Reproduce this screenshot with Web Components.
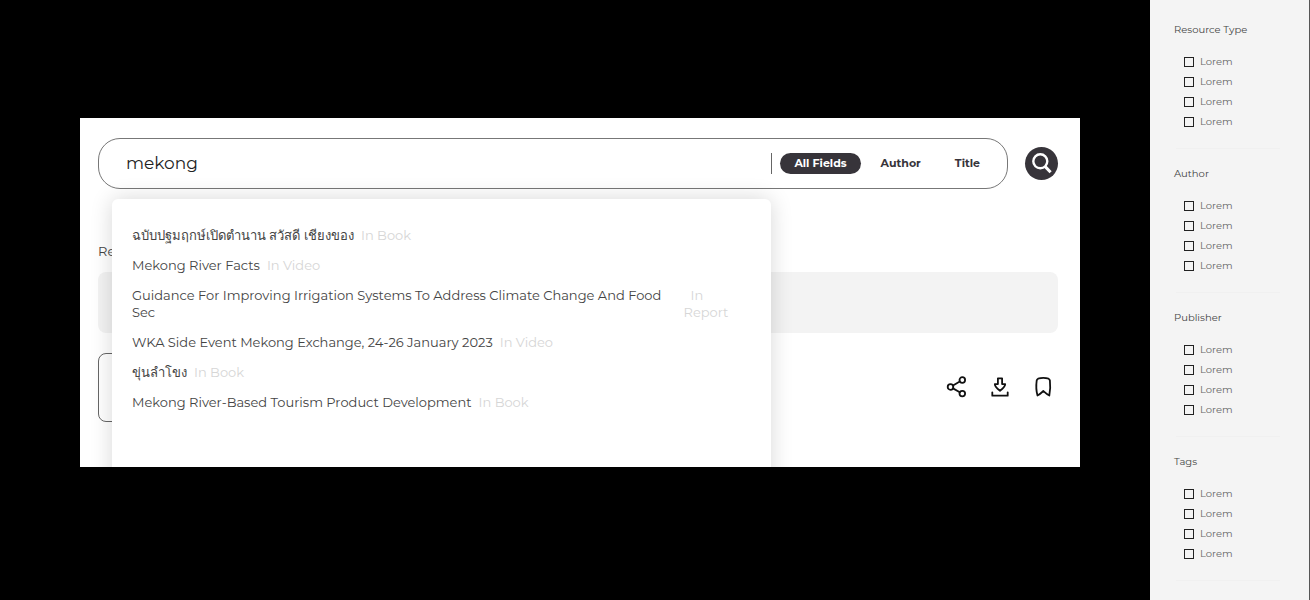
<!DOCTYPE html>
<html lang="en">
<head>
<meta charset="utf-8">
<meta name="viewport" content="width=device-width, initial-scale=1">
<title>Library search</title>
<style>
body {
  margin: 0;
  --ink: #37343a;
  --text: #444;
  --muted: #d6d6d6;
  --surface: #f4f4f4;
  font-family: Montserrat, Inter, "Noto Sans", "Open Sans", sans-serif;
  font-size: 13px;
  color: var(--text);
  background: #000;
}
</style>
</head>
<body>
<library-page>
  <search-panel>
    <search-box value="mekong">
      <search-results>
        <search-hit kind="In Book" lang="th">ฉบับปฐมฤกษ์เปิดตำนาน สวัสดี เชียงของ</search-hit>
        <search-hit kind="In Video">Mekong River Facts</search-hit>
        <search-hit kind="In Report">Guidance For Improving Irrigation Systems To Address Climate Change And Food Sec</search-hit>
        <search-hit kind="In Video">WKA Side Event Mekong Exchange, 24-26 January 2023</search-hit>
        <search-hit kind="In Book" lang="th">ขุ่นลำโขง</search-hit>
        <search-hit kind="In Book">Mekong River-Based Tourism Product Development</search-hit>
      </search-results>
    </search-box>
    <resource-toolbar heading="Re"></resource-toolbar>
  </search-panel>
  <filter-sidebar slot="sidebar">
    <filter-group heading="Resource Type" options="Lorem,Lorem,Lorem,Lorem"></filter-group>
    <filter-group heading="Author" options="Lorem,Lorem,Lorem,Lorem"></filter-group>
    <filter-group heading="Publisher" options="Lorem,Lorem,Lorem,Lorem"></filter-group>
    <filter-group heading="Tags" options="Lorem,Lorem,Lorem,Lorem"></filter-group>
  </filter-sidebar>
</library-page>

<script>
class BaseElement extends HTMLElement {
  constructor() {
    super();
    this.attachShadow({ mode: 'open' });
    this.shadowRoot.innerHTML = this.render();
  }
}

class LibraryPage extends BaseElement {
  render() {
    return `
<style>
:host {
  display: grid;
  grid-template-columns: 1fr 160px;
  height: 100vh;
  overflow: hidden;
}
main {
  display: grid;
  padding: 118px 70px 133px 80px;
  min-width: 0;
  background: #000;
}
</style>
<main><slot></slot></main>
<slot name="sidebar"></slot>`;
  }
}

class SearchPanel extends BaseElement {
  render() {
    return `
<style>
:host {
  display: block;
  box-sizing: border-box;
  padding: 20px 22px 0 18px;
  overflow: hidden;
  background: #fff;
}
</style>
<slot></slot>`;
  }
}

class SearchBox extends BaseElement {
  render() {
    return `
<style>
:host {
  display: block;
  position: relative;
}
form {
  display: flex;
  align-items: center;
  gap: 17px;
}
.field {
  flex: 1;
  display: flex;
  align-items: center;
  gap: 8px;
  min-width: 0;
  padding: 14px 13px 14px 27px;
  border: 1px solid #777;
  border-radius: 22px;
}
input {
  flex: 1;
  min-width: 0;
  padding: 0;
  border: 0;
  outline: none;
  background: none;
  font: inherit;
  font-size: 17px;
  line-height: 21px;
  color: #222;
}
.scopes {
  display: flex;
  gap: 6px;
  padding-left: 8px;
  border-left: 1px solid #666;
}
.scopes button {
  padding: 0 14px;
  border: 0;
  border-radius: 11px;
  background: none;
  color: var(--ink);
  font: inherit;
  font-size: 11px;
  font-weight: 700;
  line-height: 21px;
  cursor: pointer;
}
.scopes button[aria-pressed="true"] {
  background: var(--ink);
  color: #fff;
}
.submit {
  display: flex;
  padding: 0;
  border: 0;
  border-radius: 50%;
  background: var(--ink);
  cursor: pointer;
}
</style>
<form role="search">
  <div class="field">
    <input type="text" aria-label="Search" value="${this.getAttribute('value') || ''}">
    <div class="scopes">
      <button type="button" aria-pressed="true">All Fields</button>
      <button type="button" aria-pressed="false">Author</button>
      <button type="button" aria-pressed="false">Title</button>
    </div>
  </div>
  <button class="submit" type="submit" aria-label="Search">
    <svg width="33" height="33" viewBox="0 0 33 33" fill="none" stroke="#fff">
      <circle cx="15.300" cy="14.300" r="7" stroke-width="2.400"/>
      <path d="M20 19.400l5.600 5.800" stroke-width="3"/>
    </svg>
  </button>
</form>
<slot></slot>`;
  }

  connectedCallback() {
    const scopes = this.shadowRoot.querySelectorAll('.scopes button');
    scopes.forEach(scope => {
      scope.addEventListener('click', () => {
        scopes.forEach(s => s.setAttribute('aria-pressed', s === scope));
      });
    });
    this.shadowRoot.querySelector('form').addEventListener('submit', e => e.preventDefault());
  }
}

class SearchResults extends BaseElement {
  render() {
    return `
<style>
:host {
  display: flex;
  flex-direction: column;
  gap: 13px;
  position: absolute;
  z-index: 1;
  top: calc(100% + 10px);
  left: 14px;
  right: 287px;
  box-sizing: border-box;
  min-height: 320px;
  padding: 28px 20px;
  border-radius: 6px;
  background: #fff;
  box-shadow: 0 0 22px rgba(0, 0, 0, .16);
}
</style>
<slot></slot>`;
  }
}

class SearchHit extends BaseElement {
  render() {
    return `
<style>
:host {
  display: block;
  line-height: 17px;
}
a {
  display: flex;
  color: inherit;
  text-decoration: none;
}
:host(:lang(th)) .title {
  font-weight: 500;
}
.kind {
  flex: 0 1 auto;
  text-indent: 7px;
  color: var(--muted);
}
</style>
<a href="#"><span class="title"><slot></slot></span><span class="kind">${this.getAttribute('kind')}</span></a>`;
  }
}

class ResourceToolbar extends BaseElement {
  render() {
    return `
<style>
:host {
  display: block;
}
h2 {
  margin: 52px 0 11px;
  font-size: 13px;
  font-weight: 400;
  line-height: 20px;
}
.bar {
  height: 61px;
  border-radius: 8px;
  background: #f3f3f3;
}
.row {
  display: flex;
  align-items: center;
  justify-content: space-between;
  margin-top: 20px;
}
.card {
  box-sizing: border-box;
  width: 60%;
  height: 69px;
  border: 1px solid #666;
  border-radius: 8px;
}
.actions {
  display: flex;
  gap: 19px;
  margin: 0 3px 2px 0;
}
.actions button {
  display: flex;
  padding: 0;
  border: 0;
  background: none;
  color: #111;
  cursor: pointer;
}
svg {
  fill: none;
  stroke: currentColor;
  stroke-width: 1.800;
  stroke-linecap: round;
  stroke-linejoin: round;
}
</style>
<h2>${this.getAttribute('heading')}</h2>
<div class="bar"></div>
<div class="row">
  <div class="card"></div>
  <div class="actions">
    <button aria-label="Share">
      <svg width="24" height="24" viewBox="0 0 24 24">
        <circle cx="5.500" cy="12" r="2.800"/>
        <circle cx="17.300" cy="5" r="2.800"/>
        <circle cx="17.300" cy="18.600" r="2.800"/>
        <path d="M8 10.600l6.800-4.100M8 13.400l6.800 3.800"/>
      </svg>
    </button>
    <button aria-label="Download">
      <svg width="24" height="24" viewBox="0 0 24 24">
        <path d="M9.900 3.300h4.200v5.800h3.100c0 2.200-2.500 4.800-5.200 6.700c-2.700-1.900-5.200-4.500-5.200-6.700h3.100z"/>
        <path d="M4.300 17.300v3.400h15.400v-3.400"/>
      </svg>
    </button>
    <button aria-label="Bookmark">
      <svg width="24" height="24" viewBox="0 0 24 24">
        <path d="M5.700 5.500C6 3.400 7.500 2.800 12.300 2.800s6.300.6 6.600 2.700c.5 4.500.4 10.500-.6 15c-2-.8-3.900-2.600-6-4.500c-2.100 1.900-3.800 3.700-5.800 4.500C5.200 16 5.100 10 5.700 5.500z"/>
      </svg>
    </button>
  </div>
</div>`;
  }
}

class FilterSidebar extends BaseElement {
  render() {
    return `
<style>
:host {
  display: block;
  padding: 20px 29px 0 24px;
  border-right: 1px solid #555;
  overflow: hidden;
  background: var(--surface);
}
</style>
<aside><slot></slot></aside>`;
  }
}

class FilterGroup extends BaseElement {
  render() {
    const options = this.getAttribute('options').split(',');
    return `
<style>
:host {
  display: block;
  margin-bottom: 15px;
}
fieldset {
  min-width: 0;
  margin: 0;
  padding: 0;
  border: 0;
}
legend {
  padding: 0;
  font-size: 10px;
  line-height: 20px;
}
ul {
  margin: 12px 0 0 2px;
  padding: 0 0 16px 8px;
  border-bottom: 1px solid #f0f0f0;
  list-style: none;
}
label {
  display: flex;
  align-items: center;
  gap: 6px;
  font-size: 10px;
  line-height: 20px;
  color: #666;
}
input {
  appearance: none;
  box-sizing: border-box;
  width: 10px;
  height: 10px;
  margin: 0;
  border: 1px solid #222;
}
input:checked {
  background: #333;
}
</style>
<fieldset>
  <legend>${this.getAttribute('heading')}</legend>
  <ul>
    ${options.map(option => `<li><label><input type="checkbox">${option}</label></li>`).join('')}
  </ul>
</fieldset>`;
  }
}

customElements.define('library-page', LibraryPage);
customElements.define('search-panel', SearchPanel);
customElements.define('search-box', SearchBox);
customElements.define('search-results', SearchResults);
customElements.define('search-hit', SearchHit);
customElements.define('resource-toolbar', ResourceToolbar);
customElements.define('filter-sidebar', FilterSidebar);
customElements.define('filter-group', FilterGroup);
</script>
</body>
</html>
